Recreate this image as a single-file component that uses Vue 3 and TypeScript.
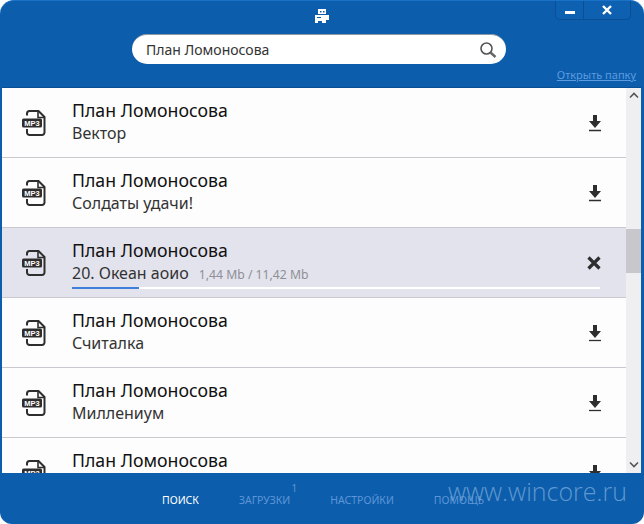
<template>
  <div class="window">
    <!-- шапка -->
    <header class="top">
      <div class="top-bar">
        <svg class="logo" width="16" height="16" viewBox="0 0 16 16">
          <path d="M4 1h8v5H4z" fill="#fff" />
          <path d="M1 7h14v5h-3v3H8v-2H4v2H1z" fill="#fff" />
          <path d="M6 3h1.500v1.500H6zM9 3h1.500v1.500H9z" fill="#0c5dab" />
          <path d="M3 9h4v1H3z" fill="#0c5dab" />
        </svg>
        <div class="win-btns">
          <button class="win-btn min"><span class="min-mark"></span></button>
          <button class="win-btn close">
            <svg width="10" height="10" viewBox="0 0 10 10">
              <path d="M1 1l8 8M9 1l-8 8" stroke="#fff" stroke-width="2.400" />
            </svg>
          </button>
        </div>
      </div>
      <div class="search">
        <span class="search-text">План Ломоносова</span>
        <svg width="18" height="18" viewBox="0 0 18 18">
          <circle cx="7.500" cy="7.500" r="5.500" fill="none" stroke="#555" stroke-width="1.600" />
          <path d="M11.500 11.500l5 4.500" stroke="#666" stroke-width="2.400" />
        </svg>
      </div>
      <div class="folder-row"><a class="folder-link">Открыть папку</a></div>
    </header>

    <!-- список -->
    <div class="list-wrap">
      <div class="list">
        <div v-for="(row, idx) in rows" :key="idx" class="row" :class="{ active: row.progress }">
          <svg class="mp3" width="26" height="28" viewBox="0 0 26 28">
            <path d="M6 6.500V4.500a2.500 2.500 0 0 1 2.500-2.500h9l6 6v15.500a2.500 2.500 0 0 1-2.500 2.500H8.500A2.500 2.500 0 0 1 6 23.500V20" fill="none" stroke="#2e2e2e" stroke-width="2" />
            <path d="M17 2v6.500h6.500" fill="none" stroke="#2e2e2e" stroke-width="1.600" />
            <rect x="1" y="9.500" width="20" height="9" rx="1.500" fill="#2e2e2e" />
            <text x="11" y="17" class="mp3-text">MP3</text>
          </svg>
          <div class="row-main">
            <div class="row-title">{{ row.title }}</div>
            <div class="row-sub">
              {{ row.sub }}
              <span v-if="row.size" class="row-size">{{ row.size }}</span>
            </div>
            <div v-if="row.progress" class="bar">
              <div class="bar-fill" :style="{ width: row.progress + '%' }"></div>
            </div>
          </div>
          <svg v-if="row.progress" class="action" width="16" height="16" viewBox="0 0 16 16">
            <path d="M2.500 2.500l11 11M13.500 2.500l-11 11" stroke="#2e2e2e" stroke-width="3.200" />
          </svg>
          <svg v-else class="action" width="14" height="18" viewBox="0 0 14 18">
            <path d="M5 1h4v6h4l-6 7-6-7h4z" fill="#2e2e2e" />
            <path d="M1 16.500h12" stroke="#2e2e2e" stroke-width="1.300" />
          </svg>
        </div>
      </div>
      <div class="scroll">
        <svg width="10" height="7" viewBox="0 0 10 7">
          <path d="M1 5.500l4-4 4 4" fill="none" stroke="#555" stroke-width="1.600" />
        </svg>
        <div class="track"><div class="thumb"></div></div>
        <svg width="10" height="7" viewBox="0 0 10 7">
          <path d="M1 1.500l4 4 4-4" fill="none" stroke="#555" stroke-width="1.600" />
        </svg>
      </div>
    </div>

    <!-- меню снизу -->
    <footer class="bottom">
      <span v-for="(item, idx) in menu" :key="idx" class="menu-item" :class="{ current: idx === 0 }">
        {{ item.label }}<sup v-if="item.badge" class="badge">{{ item.badge }}</sup>
      </span>
      <span class="watermark">www.wincore.ru</span>
    </footer>
  </div>
</template>

<script setup lang="ts">
interface Row {
  title: string
  sub: string
  size?: string
  progress?: number
}

const rows: Row[] = [
  { title: 'План Ломоносова', sub: 'Вектор' },
  { title: 'План Ломоносова', sub: 'Солдаты удачи!' },
  { title: 'План Ломоносова', sub: '20. Океан аоио', size: '1,44 Mb / 11,42 Mb', progress: 12.700 },
  { title: 'План Ломоносова', sub: 'Считалка' },
  { title: 'План Ломоносова', sub: 'Миллениум' },
  { title: 'План Ломоносова', sub: 'Вектор' }
]

const menu = [
  { label: 'ПОИСК' },
  { label: 'ЗАГРУЗКИ', badge: '1' },
  { label: 'НАСТРОЙКИ' },
  { label: 'ПОМОЩЬ' }
]
</script>

<style>
html, body { margin: 0; background: #fff; overflow: hidden; }
</style>

<style scoped>
.window {
  width: 644px;
  height: 524px;
  display: flex;
  flex-direction: column;
  background: #0c5dab;
  border-radius: 14px 14px 12px 12px;
  overflow: hidden;
  font-family: "Noto Sans", sans-serif;
  box-sizing: border-box;
  border-top: 1px solid #1a72c8;
}

/* шапка */
.top { height: 86px; flex-shrink: 0; display: flex; flex-direction: column; }
.top-bar { height: 33px; display: flex; justify-content: center; position: relative; }
.logo { margin-top: 7px; }
.win-btns {
  position: absolute;
  top: -1px;
  right: 13px;
  display: flex;
  height: 19px;
  border: 1px solid #0a4f94;
  border-top: none;
  border-radius: 0 0 5px 5px;
  overflow: hidden;
  background: #0e60b0;
}
.win-btn { border: none; background: none; padding: 0; display: flex; align-items: center; justify-content: center; }
.win-btn.min { width: 28px; border-right: 1px solid #0a4f94; }
.win-btn.close { width: 46px; }
.min-mark { width: 10px; height: 3px; background: #fff; margin-top: 5px; }

.search {
  align-self: flex-start;
  margin-left: 132px;
  width: 374px;
  height: 30px;
  box-sizing: border-box;
  padding: 0 9px 0 14px;
  background: #fff;
  border-top: 1px solid #8d9aa8;
  border-radius: 15px;
  display: flex;
  align-items: center;
  justify-content: space-between;
}
.search-text { font-size: 14px; color: #333; }
.folder-row { display: flex; justify-content: flex-end; padding: 3px 8px 0 0; }
.folder-link { font-size: 11px; color: #5b9be0; text-decoration: underline; }

/* список */
.list-wrap { flex: 1; min-height: 0; margin: 0 3px 0 2px; display: flex; background: #fff; border-top: 1px solid #0a4f94; }
.list { flex: 1; overflow: hidden; }
.row {
  height: 70px;
  box-sizing: border-box;
  display: flex;
  align-items: center;
  padding: 0 24px 0 19px;
  border-bottom: 1px solid #c9c9cf;
  background: #fdfdfd;
}
.row.active { background: #e3e3ed; }
.mp3 { flex-shrink: 0; margin-top: 1px; }
.mp3-text { font: bold 7.500px "Liberation Sans", sans-serif; fill: #fff; text-anchor: middle; }
.row-main { flex: 1; margin-left: 25px; position: relative; align-self: stretch; padding-top: 12px; }
.row-title { font-size: 17.700px; line-height: 21px; color: #111; }
.row-sub { font-size: 16px; line-height: 25px; color: #333; white-space: nowrap; }
.row-size { font-size: 12.200px; color: #8f8f95; margin-left: 6px; }
.bar { position: absolute; left: 0; right: -30px; bottom: 8px; height: 2px; background: #fff; }
.bar-fill { height: 100%; background: #3f7fdc; }
.action { flex-shrink: 0; margin-left: 16px; }

/* скролл */
.scroll {
  width: 15px;
  flex-shrink: 0;
  background: #efeff1;
  display: flex;
  flex-direction: column;
  align-items: center;
  padding: 4px 0 5px;
  box-sizing: border-box;
}
.track { flex: 1; width: 100%; padding-top: 130px; }
.thumb { height: 44px; background: #c8c8cc; }

/* низ */
.bottom {
  height: 51px;
  flex-shrink: 0;
  position: relative;
  box-sizing: border-box;
  padding: 20px 0 0 162px;
  display: flex;
  gap: 40px;
  font-size: 10.500px;
  color: #5d95d8;
}
.menu-item { position: relative; white-space: nowrap; }
.menu-item.current { color: #fff; }
.badge { position: absolute; top: -11px; right: -7px; font-size: 10px; line-height: 12px; }
.watermark {
  position: absolute;
  right: 17px;
  top: 1px;
  font-family: "Open Sans", sans-serif;
  font-weight: 300;
  font-size: 25px;
  color: #6ea3d8;
  opacity: 0.850;
}
</style>
